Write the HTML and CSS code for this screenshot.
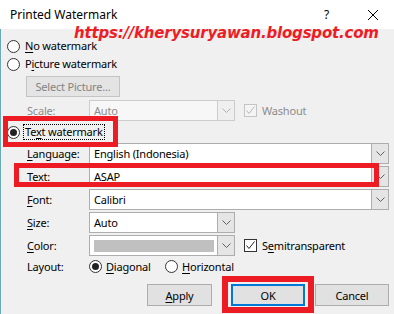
FILE: index.html
```html
<!DOCTYPE html>
<html lang="en">
<head>
    <meta charset="UTF-8">
    <meta name="viewport" content="width=device-width, initial-scale=1.0">
    <title>Printed Watermark</title>
    <link rel="stylesheet" href="styles.css">
</head>
<body>
    <div class="dialog">
        <div class="titlebar">
            <span class="title">Printed Watermark</span>
            <span class="help">?</span>
            <span class="close">
                <svg width="10" height="10" viewBox="0 0 10 10"><path d="M0 0 L10 10 M10 0 L0 10" stroke="#000" stroke-width="1" fill="none"/></svg>
            </span>
        </div>

        <div class="body">
            <div class="radio-row">
                <span class="radio"></span>
                <span class="opt"><u>N</u>o watermark</span>
            </div>
            <div class="radio-row">
                <span class="radio"></span>
                <span class="opt">P<u>i</u>cture watermark</span>
            </div>
            <button class="btn btn-select" disabled>Select Picture...</button>

            <div class="field-row row-scale">
                <span class="label disabled">Scale:</span>
                <div class="combo short disabled">
                    <span class="field">Auto</span>
                    <span class="drop"><svg width="9" height="5" viewBox="0 0 9 5"><path d="M0.5 0.5 L4.5 4.5 L8.5 0.5" fill="none" stroke="#b0b0b0"/></svg></span>
                </div>
                <span class="check disabled"><svg width="11" height="11" viewBox="0 0 11 11"><path d="M1.5 5.5 L4 8.5 L9.5 1.5" fill="none" stroke="#b8b8b8"/></svg></span>
                <span class="check-label disabled">Washout</span>
            </div>

            <div class="radio-row row-textwm">
                <span class="radio checked"></span>
                <span class="opt focus">Te<u>x</u>t watermark</span>
            </div>

            <div class="field-row row-lang">
                <span class="label"><u>L</u>anguage:</span>
                <div class="combo">
                    <span class="field">English (Indonesia)</span>
                    <span class="drop"><svg width="9" height="5" viewBox="0 0 9 5"><path d="M0.5 0.5 L4.5 4.5 L8.5 0.5" fill="none" stroke="#606060"/></svg></span>
                </div>
            </div>
            <div class="field-row">
                <span class="label"><u>T</u>ext:</span>
                <div class="combo">
                    <span class="field">ASAP</span>
                    <span class="drop"><svg width="9" height="5" viewBox="0 0 9 5"><path d="M0.5 0.5 L4.5 4.5 L8.5 0.5" fill="none" stroke="#606060"/></svg></span>
                </div>
            </div>
            <div class="field-row">
                <span class="label"><u>F</u>ont:</span>
                <div class="combo">
                    <span class="field">Calibri</span>
                    <span class="drop"><svg width="9" height="5" viewBox="0 0 9 5"><path d="M0.5 0.5 L4.5 4.5 L8.5 0.5" fill="none" stroke="#606060"/></svg></span>
                </div>
            </div>
            <div class="field-row">
                <span class="label"><u>S</u>ize:</span>
                <div class="combo short">
                    <span class="field">Auto</span>
                    <span class="drop"><svg width="9" height="5" viewBox="0 0 9 5"><path d="M0.5 0.5 L4.5 4.5 L8.5 0.5" fill="none" stroke="#606060"/></svg></span>
                </div>
            </div>
            <div class="field-row">
                <span class="label"><u>C</u>olor:</span>
                <div class="combo short">
                    <span class="field"><span class="swatch"></span></span>
                    <span class="drop"><svg width="9" height="5" viewBox="0 0 9 5"><path d="M0.5 0.5 L4.5 4.5 L8.5 0.5" fill="none" stroke="#606060"/></svg></span>
                </div>
                <span class="check"><svg width="11" height="11" viewBox="0 0 11 11"><path d="M1.5 5.5 L4 8.5 L9.5 1.5" fill="none" stroke="#222"/></svg></span>
                <span class="check-label">S<u>e</u>mitransparent</span>
            </div>

            <div class="field-row row-layout">
                <span class="label">Layout:</span>
                <div class="layout-opt">
                    <span class="radio checked"></span>
                    <span><u>D</u>iagonal</span>
                </div>
                <div class="layout-opt">
                    <span class="radio"></span>
                    <span><u>H</u>orizontal</span>
                </div>
            </div>

            <div class="buttons">
                <button class="btn btn-apply"><u>A</u>pply</button>
                <button class="btn btn-ok">OK</button>
                <button class="btn btn-cancel">Cancel</button>
            </div>
        </div>

        <span class="stamp">https://kherysuryawan.blogspot.com</span>
        <div class="mark mark-wm"></div>
        <div class="mark mark-text"></div>
        <div class="mark mark-ok"></div>
    </div>
</body>
</html>
```

FILE: styles.css
```css
body {
    margin: 0;
    font-family: "Noto Sans", sans-serif;
    font-size: 11px;
    letter-spacing: -0.2px;
    color: #000;
}
.dialog {
    position: relative;
    width: 394px;
    height: 314px;
    overflow: hidden;
    background: #f0f0f0;
}
.titlebar {
    height: 29px;
    background: #fff;
    display: flex;
    align-items: center;
}
.title {
    flex: 1;
    padding-left: 10px;
    font-size: 12px;
    letter-spacing: 0;
}
.help {
    width: 7px;
    margin-right: 37px;
    font-size: 12px;
}
.close {
    width: 10px;
    height: 10px;
    margin-right: 16px;
    display: flex;
}
.body {
    height: 285px;
    box-sizing: border-box;
    border-left: 1px solid #6aaab4;
    padding-top: 8px;
}
u {
    text-underline-offset: 2px;
}

/* radio rows */
.radio-row {
    display: flex;
    align-items: center;
    height: 18px;
    padding-left: 6px;
    gap: 3px;
}
.radio {
    width: 13px;
    height: 13px;
    box-sizing: border-box;
    border: 1px solid #333;
    border-radius: 50%;
    background: #fff;
    display: flex;
    align-items: center;
    justify-content: center;
    flex-shrink: 0;
}
.radio.checked::after {
    content: "";
    width: 7px;
    height: 7px;
    border-radius: 50%;
    background: #222;
}
.opt {
    border: 1px solid transparent;
    padding: 0 1px;
    line-height: 14px;
}
.opt.focus {
    border: 1px dotted #000;
}
.row-textwm {
    margin-top: 2px;
}

/* buttons */
.btn {
    font-family: "Noto Sans", sans-serif;
    font-size: 11px;
    letter-spacing: -0.2px;
    height: 22px;
    background: #e1e1e1;
    border: 1px solid #adadad;
    color: #000;
    padding: 0;
}
.btn-select {
    display: block;
    margin: 3px 0 0 25px;
    width: 94px;
    height: 21px;
    color: #838383;
    border-color: #c4c4c4;
    background: #e4e4e4;
}

/* label + field rows */
.field-row {
    display: flex;
    align-items: center;
    height: 21px;
    padding-left: 26px;
    margin-top: 2px;
}
.row-scale {
    margin-top: 3px;
}
.label {
    width: 62px;
    flex-shrink: 0;
}
.disabled {
    color: #8c8c8c;
}
.combo {
    display: flex;
    width: 300px;
    height: 21px;
}
.combo.short {
    width: 146px;
}
.field {
    flex: 1;
    box-sizing: border-box;
    border: 1px solid #adadad;
    background: #fff;
    padding-left: 4px;
    display: flex;
    align-items: center;
}
.drop {
    width: 17px;
    box-sizing: border-box;
    border: 1px solid #adadad;
    border-left: none;
    background: #e5e5e5;
    display: flex;
    align-items: center;
    justify-content: center;
}
.combo.disabled .field {
    background: #f7f7f7;
    border-color: #cccccc;
}
.combo.disabled .drop {
    background: #efefef;
    border-color: #cccccc;
}
.swatch {
    display: block;
    width: 120px;
    height: 12px;
    background: #c0c0c0;
}
.check {
    width: 13px;
    height: 13px;
    box-sizing: border-box;
    border: 1px solid #333;
    background: #fff;
    margin-left: 9px;
    display: flex;
    align-items: center;
    justify-content: center;
}
.check.disabled {
    border-color: #c4c4c4;
    background: #f4f4f4;
}
.check-label {
    margin-left: 5px;
}
.row-layout {
    height: 18px;
    margin-top: 1px;
}
.layout-opt {
    display: flex;
    align-items: center;
    gap: 4px;
    width: 76px;
}

.buttons {
    display: flex;
    justify-content: flex-end;
    padding-right: 5px;
    margin-top: 9px;
}
.btn-apply {
    width: 65px;
    margin-right: 19px;
}
.btn-ok {
    width: 74px;
    margin-right: 10px;
    border: 2px solid #0078d7;
}
.btn-cancel {
    width: 74px;
}

/* annotations drawn over the dialog */
.stamp {
    position: absolute;
    left: 74px;
    top: 24px;
    font-family: "DejaVu Sans", sans-serif;
    font-weight: bold;
    font-style: italic;
    font-size: 15px;
    color: #ee1c25;
}
.mark {
    position: absolute;
    box-sizing: border-box;
    border: 5px solid #ed1c24;
}
.mark-wm {
    left: 3px;
    top: 116px;
    width: 115px;
    height: 31px;
}
.mark-text {
    left: 14px;
    top: 163px;
    width: 365px;
    height: 24px;
}
.mark-ok {
    left: 222px;
    top: 276px;
    width: 92px;
    height: 37px;
    border-width: 6px;
}
```
